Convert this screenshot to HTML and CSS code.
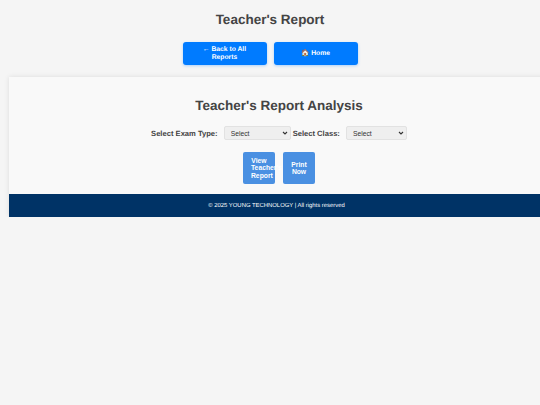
FILE: index.html
```html
<!DOCTYPE html>
<html>
<head>
    <meta charset="utf-8">
    <meta name="viewport" content="width=device-width, initial-scale=1">
    <title>Teacher's Report</title>
    <link rel="stylesheet" href="styles.css">
</head>
<body>
    <h1>Teacher's Report</h1>

    <div class="nav-buttons">
        <a class="nav-btn" href="#"><span>← Back to All Reports</span></a>
        <a class="nav-btn" href="#"><span>🏠 Home</span></a>
    </div>

    <div class="container">
        <div class="report-box">
            <h2>Teacher's Report Analysis</h2>

            <div class="filters">
                <label for="exam_type">Select Exam Type:</label>
                <select id="exam_type">
                    <option>Select</option>
                </select>
                <label for="class_name">Select Class:</label>
                <select id="class_name">
                    <option>Select</option>
                </select>
            </div>

            <div class="actions">
                <button type="button">View Teacher's Report</button>
                <button type="button">Print Now</button>
            </div>
        </div>

        <div class="footer">© 2025 YOUNG TECHNOLOGY | All rights reserved</div>
    </div>
</body>
</html>
```

FILE: styles.css
```css
html, body {
    overflow-x: hidden;
}

body {
    font-family: "Liberation Sans", Arial, sans-serif;
    margin: 0;
    padding: 0;
    background-color: #f5f5f5;
    color: #444;
    text-rendering: geometricPrecision;
}

h1 {
    margin: 0;
    padding-top: 11px;
    font-size: 13.5px;
    line-height: 17px;
    text-align: center;
    color: #444;
}

.nav-buttons {
    display: flex;
    justify-content: center;
    gap: 7px;
    margin-top: 14px;
}

.nav-btn {
    display: flex;
    align-items: center;
    justify-content: center;
    box-sizing: border-box;
    width: 84px;
    height: 23px;
    padding: 0 12px;
    background: #007bff;
    color: white;
    border-radius: 3px;
    box-shadow: 0 1px 3px rgba(0,123,255,0.3);
    font-size: 6.75px;
    font-weight: bold;
    line-height: 8px;
    text-align: center;
    text-decoration: none;
}

.container {
    width: 540px;
    margin: 12px 0 0 9px;
    box-shadow: 0 0 5px rgba(0,0,0,0.1);
}

.report-box {
    background: #f9f9f9;
    height: 117px;
    box-sizing: border-box;
    padding-top: 20px;
    text-align: center;
}

h2 {
    margin: 0;
    font-size: 13.5px;
    line-height: 17px;
    color: #444;
}

.filters {
    display: flex;
    justify-content: center;
    align-items: center;
    margin-top: 12px;
    height: 14px;
}

label {
    font-size: 7.6px;
    font-weight: bold;
    color: #444;
}

select {
    appearance: none;
    box-sizing: border-box;
    width: 67px;
    height: 14px;
    margin: 0 2px 0 6px;
    padding: 0 0 0 6px;
    font-family: inherit;
    font-size: 6.75px;
    color: #333;
    border: 1px solid #e2e2e2;
    border-radius: 2px;
    background: #efefef url("data:image/svg+xml,%3Csvg xmlns='http://www.w3.org/2000/svg' width='6' height='4'%3E%3Cpath d='M1 1l2 2 2-2' fill='none' stroke='%23333' stroke-width='1.1'/%3E%3C/svg%3E") no-repeat right 2px center;
}

#class_name {
    width: 61px;
    margin-right: 0;
}

.actions {
    display: flex;
    justify-content: center;
    gap: 8px;
    margin-top: 12px;
}

button {
    box-sizing: border-box;
    width: 32px;
    height: 32px;
    padding: 0 8px;
    background: #4a90e2;
    color: white;
    border: none;
    border-radius: 2px;
    font-family: inherit;
    font-size: 6.75px;
    font-weight: bold;
    line-height: 7.5px;
    text-align: center;
}

.footer {
    height: 23px;
    box-sizing: border-box;
    padding: 1px 5px 0 0;
    background: #003366;
    color: white;
    font-size: 5.9px;
    line-height: 22px;
    text-align: center;
}
```
